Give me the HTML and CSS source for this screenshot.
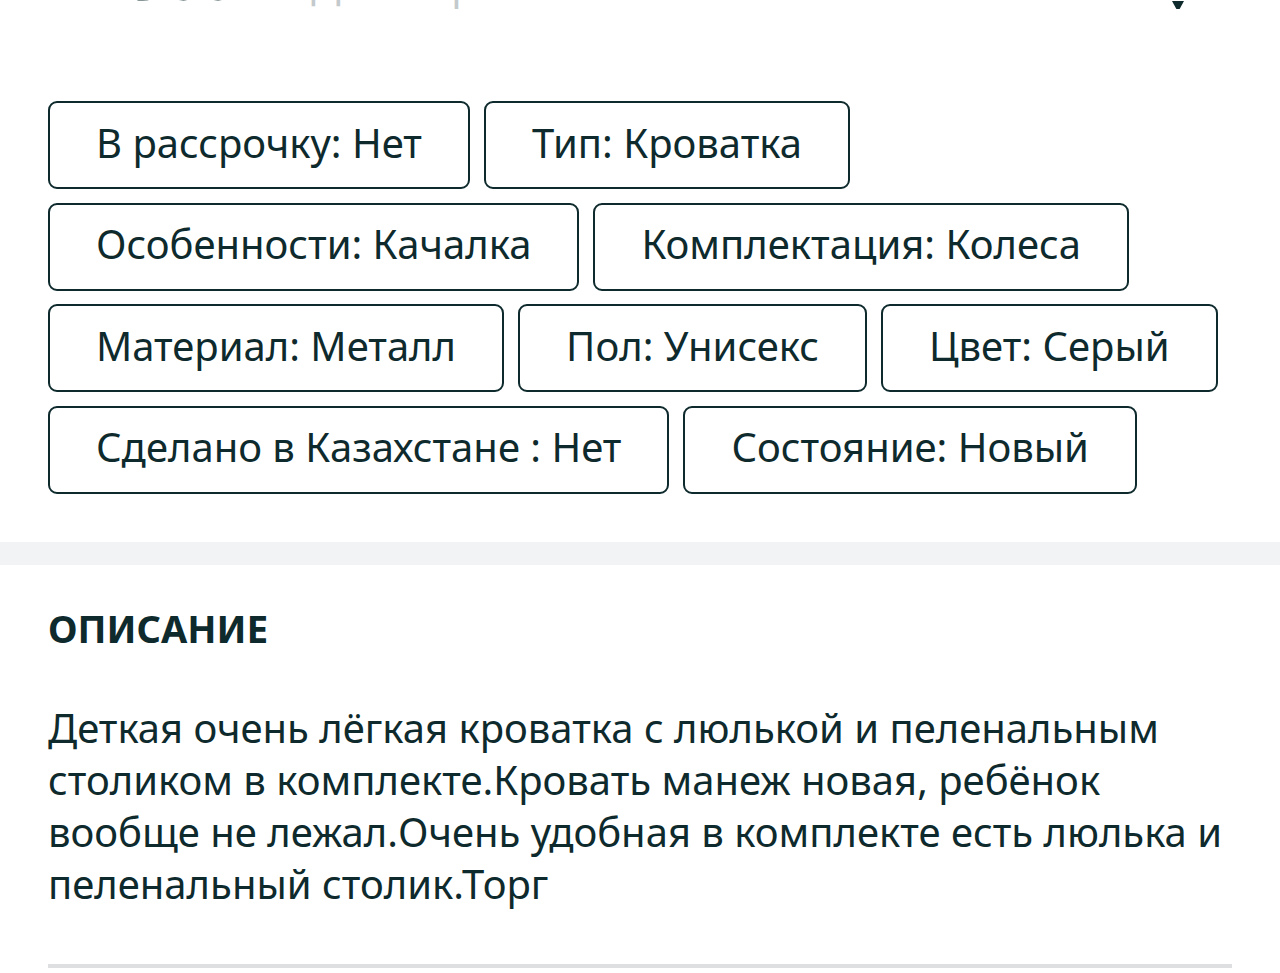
FILE: index.html
```html
<!DOCTYPE html>
<html lang="ru">
<head>
<meta charset="utf-8">
<link rel="stylesheet" href="styles.css">
</head>
<body>
<div class="price-row">
  <div class="price"><span class="amount">74 900 ₸</span><span class="nego">Договорная</span></div>
  <svg class="price-icon" width="20" height="20" viewBox="0 0 20 20"><path d="M4 4 L10 15 L16 4 Z" fill="#0e2a2d"/></svg>
</div>
<section class="params">
  <div class="chip">В рассрочку: Нет</div>
  <div class="chip">Тип: Кроватка</div>
  <div class="chip">Особенности: Качалка</div>
  <div class="chip">Комплектация: Колеса</div>
  <div class="chip">Материал: Металл</div>
  <div class="chip">Пол: Унисекс</div>
  <div class="chip">Цвет: Серый</div>
  <div class="chip">Сделано в Казахстане : Нет</div>
  <div class="chip">Состояние: Новый</div>
</section>
<div class="band"></div>
<section class="desc">
  <h2 class="desc-title">ОПИСАНИЕ</h2>
  <p class="desc-text">Деткая очень лёгкая кроватка с люлькой и пеленальным столиком в комплекте.Кровать манеж новая, ребёнок вообще не лежал.Очень удобная в комплекте есть люлька и пеленальный столик.Торг</p>
  <div class="rule"></div>
</section>
</body>
</html>
```
FILE: styles.css
```css
html, body {
  margin: 0;
  padding: 0;
  background: #ffffff;
}
body {
  font-family: "Noto Sans", "Open Sans", sans-serif;
  color: #0e2a2d;
  overflow: hidden;
  height: 973px;
}
.price-row {
  display: flex;
  justify-content: space-between;
  align-items: flex-end;
  padding: 0 48px;
  height: 9px;
  overflow: hidden;
}
.price {
  display: flex;
  align-items: baseline;
  gap: 26px;
  line-height: 1;
  margin-bottom: 2px;
}
.amount {
  font-size: 60px;
  font-weight: 700;
  color: #0e2a2d;
}
.nego {
  font-size: 40px;
  color: #c4cacc;
}
.price-icon {
  margin-right: 44px;
  margin-bottom: -8px;
}
.params {
  display: flex;
  flex-wrap: wrap;
  gap: 13.5px 14px;
  padding: 92px 48px 0;
}
.chip {
  border: 2px solid #0e2a2d;
  border-radius: 9px;
  padding: 0 46px 5px;
  box-sizing: content-box;
  height: 79px;
  display: flex;
  align-items: center;
  font-size: 40px;
  line-height: 1;
  white-space: nowrap;
}
.band {
  margin-top: 48px;
  height: 23px;
  background: #f2f3f4;
}
.desc {
  padding: 0 48px;
}
.desc-title {
  margin: 37px 0 0;
  font-size: 38px;
  font-weight: 700;
  line-height: 52px;
}
.desc-text {
  margin: 48px 0 0;
  font-size: 40px;
  line-height: 52px;
}
.rule {
  margin-top: 54px;
  height: 4px;
  background: #dddfe0;
}
```
